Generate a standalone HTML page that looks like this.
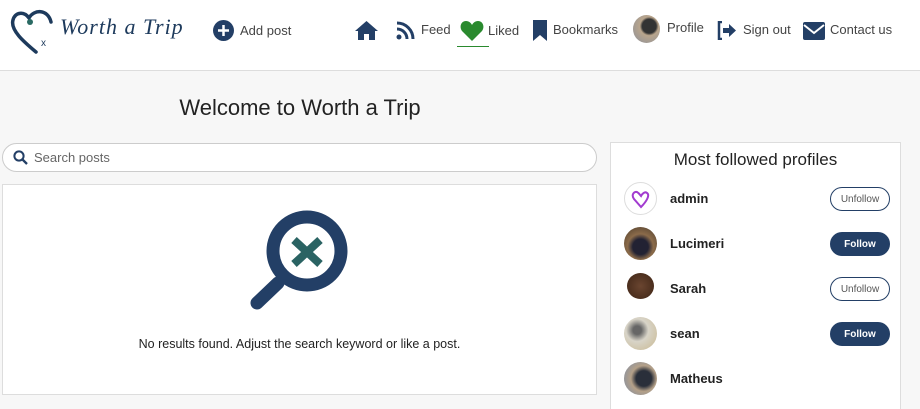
<!DOCTYPE html>
<html><head><meta charset="utf-8"><style>
*{box-sizing:border-box;margin:0;padding:0}
html,body{width:920px;height:409px;overflow:hidden}
body{background:#f7f7f7;font-family:"Liberation Sans",sans-serif;color:#222;position:relative}
.nav{position:absolute;left:0;top:0;width:920px;height:71px;background:#fff;border-bottom:1px solid #ddd}
.t{position:absolute;font-size:13px;color:#444}
.box{position:absolute;background:#fff;border:1px solid #ddd}
.row{position:absolute;left:624px;width:270px;height:34px}
.av{position:absolute;left:0;top:0;width:33px;height:33px;border-radius:50%}
.nm{position:absolute;left:46px;top:9px;font-weight:bold;font-size:13px;color:#222}
.btn{position:absolute;left:206px;top:5px;width:60px;height:24px;border-radius:12px;font-size:10px;text-align:center;line-height:22px}
.uf{border:1px solid #233f66;color:#555;background:#fff}
.f{background:#233f66;color:#fff;border:1px solid #233f66;font-weight:bold}
</style></head><body>
<div class="nav">
<svg style="position:absolute;left:10px;top:8px" width="50" height="46" viewBox="0 0 50 46"><path d="M26 44 C14 34 0 22 3 12 C5 4 14 3 19 10 C24 1 38 1 41 14" fill="none" stroke="#1d3a5c" stroke-width="3.5" stroke-linecap="round"/><circle cx="20" cy="14" r="3" fill="#2a6a63"/><text x="31" y="38" font-size="10" fill="#1d3a5c">x</text></svg>
<div style="position:absolute;left:60px;top:14px;font-family:'Liberation Serif',serif;font-style:italic;font-size:22px;color:#1d3a5c;letter-spacing:1px">Worth a Trip</div>
<svg style="position:absolute;left:213px;top:20px" width="21" height="21"><circle cx="10.5" cy="10.5" r="10.5" fill="#233f66"/><path d="M10.5 5v11M5 10.5h11" stroke="#fff" stroke-width="2.5"/></svg>
<div class="t" style="left:240px;top:23px">Add post</div>
<svg style="position:absolute;left:354px;top:20px" width="25" height="21" viewBox="0 0 25 21"><path d="M12.5 1 L24 11 H21 V20 H15 V14 H10 V20 H4 V11 H1 Z" fill="#233f66"/></svg>
<svg style="position:absolute;left:396px;top:20px" width="20" height="20" viewBox="0 0 20 20"><circle cx="3" cy="17" r="2.5" fill="#233f66"/><path d="M1 9a10 10 0 0 1 10 10M1 3a16 16 0 0 1 16 16" fill="none" stroke="#233f66" stroke-width="3"/></svg>
<div class="t" style="left:421px;top:22px">Feed</div>
<svg style="position:absolute;left:460px;top:20px" width="24" height="21" viewBox="0 0 24 21"><path d="M12 21 L2 11 C-1 7 1 1 6 1 C9 1 11 3 12 5 C13 3 15 1 18 1 C23 1 25 7 22 11 Z" fill="#2a8a2e"/></svg>
<div class="t" style="left:488px;top:23px">Liked</div>
<div style="position:absolute;left:457px;top:46px;width:32px;height:1px;background:#2a8a2e"></div>
<svg style="position:absolute;left:533px;top:20px" width="14" height="21"><path d="M0 0H14V21L7 15L0 21Z" fill="#233f66"/></svg>
<div class="t" style="left:553px;top:22px">Bookmarks</div>
<div style="position:absolute;left:633px;top:15px;width:27px;height:28px;border-radius:50%;background:radial-gradient(circle at 60% 40%,#333 0 30%,#b9a58c 40%,#8a8f9a)"></div>
<div class="t" style="left:667px;top:20px">Profile</div>
<svg style="position:absolute;left:717px;top:21px" width="20" height="19" viewBox="0 0 20 19"><path d="M5 1H2V18H5" fill="none" stroke="#233f66" stroke-width="2.5"/><path d="M6 7H12V3L19 9.5L12 16V12H6Z" fill="#233f66"/></svg>
<div class="t" style="left:743px;top:22px">Sign out</div>
<svg style="position:absolute;left:803px;top:22px" width="22" height="18" viewBox="0 0 22 18"><rect width="22" height="18" rx="2" fill="#233f66"/><path d="M1 3L11 11L21 3" fill="none" stroke="#fff" stroke-width="2"/></svg>
<div class="t" style="left:830px;top:22px">Contact us</div>
</div>
<div style="position:absolute;left:0;width:600px;top:95px;text-align:center;font-size:22px;color:#222">Welcome to Worth a Trip</div>
<div class="box" style="left:2px;top:143px;width:595px;height:29px;border-radius:15px;border-color:#ccc"></div>
<svg style="position:absolute;left:13px;top:150px" width="15" height="15" viewBox="0 0 15 15"><circle cx="6" cy="6" r="4.6" fill="none" stroke="#233f66" stroke-width="2"/><path d="M9.5 9.5L14 14" stroke="#233f66" stroke-width="2.3"/></svg>
<div class="t" style="left:34px;top:150px;font-size:13px;color:#666">Search posts</div>
<div class="box" style="left:2px;top:184px;width:595px;height:211px"></div>
<svg style="position:absolute;left:240px;top:205px" width="120" height="110" viewBox="240 205 120 110"><path d="M257 303L278 283" stroke="#233f66" stroke-width="13" stroke-linecap="round"/><circle cx="307" cy="251" r="34" fill="#fff" stroke="#233f66" stroke-width="13"/><path d="M294 240L320 264M320 240L294 264" stroke="#2a6363" stroke-width="8"/></svg>
<div style="position:absolute;left:2px;width:595px;top:337px;text-align:center;font-size:12.5px;color:#222">No results found. Adjust the search keyword or like a post.</div>
<div class="box" style="left:610px;top:142px;width:291px;height:280px"></div>
<div style="position:absolute;left:610px;width:291px;top:150px;text-align:center;font-size:17px;color:#222">Most followed profiles</div>
<div class="row" style="top:182px"><div class="av" style="border:1px solid #ddd;background:#fff"><svg width="31" height="31" viewBox="0 0 31 31"><path d="M16 24L9 16C6 12 9 8 12 9C14 10 15 12 16 13C17 11 20 8 22 10C25 12 22 18 16 24Z" fill="none" stroke="#a23bd0" stroke-width="2"/></svg></div><div class="nm">admin</div><div class="btn uf" style="line-height:24px">Unfollow</div></div>
<div class="row" style="top:227px"><div class="av" style="background:radial-gradient(circle at 50% 60%,#223 0 30%,#8b6b4a 50%,#4a3a2a)"></div><div class="nm">Lucimeri</div><div class="btn f" style="line-height:24px">Follow</div></div>
<div class="row" style="top:272px"><div class="av" style="left:3px;top:1px;width:27px;height:26px;background:radial-gradient(circle at 50% 50%,#6a4530,#3d2415)"></div><div class="nm">Sarah</div><div class="btn uf" style="line-height:24px">Unfollow</div></div>
<div class="row" style="top:317px"><div class="av" style="background:radial-gradient(circle at 40% 40%,#666 0 15%,#d8d4c8 40%,#c9b890)"></div><div class="nm">sean</div><div class="btn f" style="line-height:24px">Follow</div></div>
<div class="row" style="top:362px"><div class="av" style="background:radial-gradient(circle at 60% 50%,#2a2f3a 0 30%,#b4a088 50%,#7a8ca8)"></div><div class="nm">Matheus</div></div>
</body></html>
